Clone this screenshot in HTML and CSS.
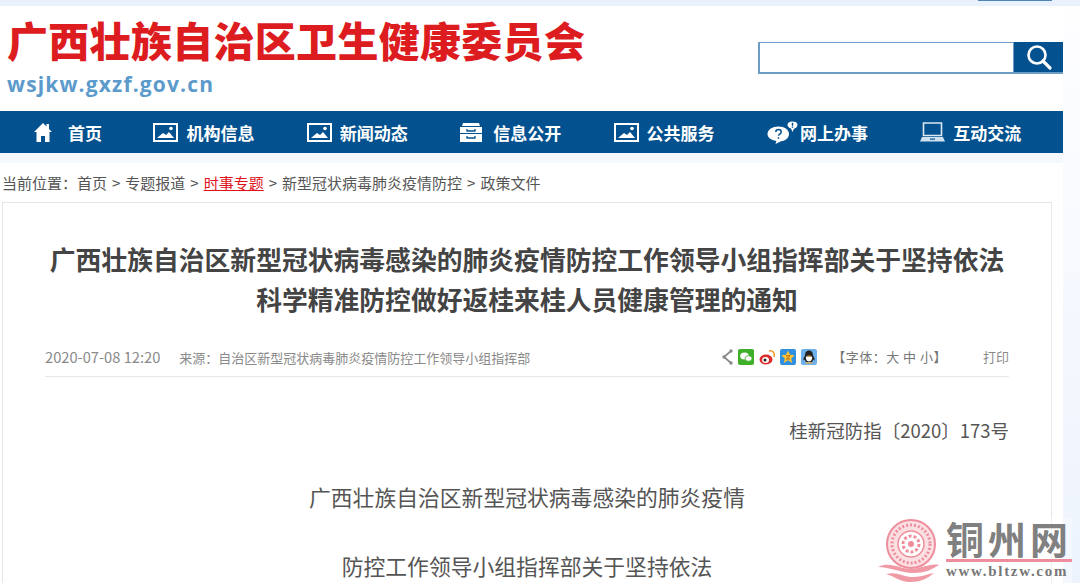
FILE: index.html
```html
<!DOCTYPE html>
<html>
<head>
    <meta charset="UTF-8">
    <title>广西壮族自治区卫生健康委员会</title>
    <link rel="stylesheet" href="styles.css">
</head>
<body>
    <div class="topbar"><span class="topbar-mark"></span></div>
    <div class="page">
        <!-- Header -->
        <div class="header">
            <div class="logo">
                <div class="logo-name">广西壮族自治区卫生健康委员会</div>
                <div class="logo-url">wsjkw.gxzf.gov.cn</div>
            </div>
            <div class="search">
                <div class="search-input"></div>
                <div class="search-button">
                    <svg width="28" height="28" viewBox="0 0 28 28"><circle cx="12" cy="12" r="8.5" fill="none" stroke="#fff" stroke-width="2.6"/><path d="M18 18l7 7" stroke="#fff" stroke-width="3.2" stroke-linecap="round"/></svg>
                </div>
            </div>
        </div>

        <!-- Nav -->
        <div class="nav">
            <a class="nav-item nav-first">
                <svg class="gap-home" width="18" height="19" viewBox="0 0 18 19"><path d="M9 0L0 9h2.500v10h4.500v-6h4v6h4.500V9H18l-3-3V1h-2.500v2.500z" fill="#fff"/></svg>首页
            </a>
            <a class="nav-item">
                <svg class="gap-pic" width="25" height="19" viewBox="0 0 25 19"><use href="#pic"/></svg>机构信息
            </a>
            <a class="nav-item">
                <svg class="gap-pic" width="25" height="19" viewBox="0 0 25 19"><use href="#pic"/></svg>新闻动态
            </a>
            <a class="nav-item">
                <svg class="gap-box" width="22" height="19" viewBox="0 0 22 19"><path d="M3 0h16l1 3H2zM0 4h22v6H0zM0 11h22v8H0z" fill="#fff"/><path d="M7 6v2h8V6M7 13v2h8v-2" fill="none" stroke="#03528f" stroke-width="1.300"/></svg>信息公开
            </a>
            <a class="nav-item">
                <svg class="gap-pic" width="25" height="19" viewBox="0 0 25 19"><use href="#pic"/></svg>公共服务
            </a>
            <a class="nav-item">
                <svg class="gap-chat" width="31" height="23" viewBox="0 0 31 23"><path d="M11.500 5.500c6 0 10.500 3 10.500 7.500s-4.500 7-8 7.300L8.500 23l.8-3C4 19 .5 16.500.5 13c0-4.500 5-7.500 11-7.500z" fill="#fff"/><path d="M25 .5c3.500 0 5.500 1.200 5.500 3.300 0 2.200-2 3.500-3.500 3.900L25.500 11 24 7.500c-2-.5-3.500-2-3.500-3.700C20.500 1.800 22.500.5 25 .5z" fill="#fff"/><path d="M8.800 11c0-3.300 5.400-3.300 5.400 0 0 2-2.700 2.200-2.700 3.800M11.500 16.200v1.600" fill="none" stroke="#03528f" stroke-width="1.500"/><path d="M25.500 1.800v3M25.500 5.500v1.200" stroke="#03528f" stroke-width="1.500"/></svg>网上办事
            </a>
            <a class="nav-item">
                <svg class="gap-laptop" width="25" height="20" viewBox="0 0 25 20"><path d="M3.500 1h18v12.500h-18z" fill="none" stroke="#dce8f2" stroke-width="1.600"/><path d="M2 15h21l2 4.500H0z" fill="#cfe0ee"/><path d="M10 16.500h5v1.200h-5z" fill="#03528f"/></svg>互动交流
            </a>
        </div>
        <div class="nav-strip"></div>

        <!-- Breadcrumb -->
        <div class="crumb">
            当前位置：首页<span class="sep">&gt;</span>专题报道<span class="sep">&gt;</span><a class="crumb-on">时事专题</a><span class="sep">&gt;</span>新型冠状病毒肺炎疫情防控<span class="sep">&gt;</span>政策文件
        </div>

        <!-- Article -->
        <div class="article">
            <h1 class="article-title">广西壮族自治区新型冠状病毒感染的肺炎疫情防控工作领导小组指挥部关于坚持依法<br>科学精准防控做好返桂来桂人员健康管理的通知</h1>
            <div class="meta">
                <div class="meta-left">
                    <span class="meta-date">2020-07-08 12:20</span>
                    <span>来源：自治区新型冠状病毒肺炎疫情防控工作领导小组指挥部</span>
                </div>
                <div class="meta-right">
                    <div class="share">
                        <svg width="12" height="16" viewBox="0 0 12 16"><path d="M10 2L3 8l7 6" fill="none" stroke="#8a8a8a" stroke-width="1.800"/><circle cx="10" cy="2" r="1.700" fill="#8a8a8a"/><circle cx="10" cy="14" r="1.700" fill="#8a8a8a"/><circle cx="3" cy="8" r="1.700" fill="#8a8a8a"/></svg>
                        <svg width="16" height="16" viewBox="0 0 16 16"><rect width="16" height="16" rx="2" fill="#3fae29"/><ellipse cx="6.500" cy="7" rx="4.300" ry="3.500" fill="#fff"/><ellipse cx="10.500" cy="9.500" rx="3.500" ry="2.800" fill="#fff" stroke="#3fae29" stroke-width=".8"/></svg>
                        <svg width="16" height="16" viewBox="0 0 16 16"><ellipse cx="7" cy="10.500" rx="6.500" ry="5" fill="#dc2b2b"/><ellipse cx="6.500" cy="11" rx="3.500" ry="3" fill="#fff"/><circle cx="6" cy="11" r="1.500" fill="#222"/><path d="M10 2c4-1 6 2 5 6" fill="none" stroke="#f19a2c" stroke-width="1.600"/></svg>
                        <svg width="16" height="16" viewBox="0 0 16 16"><rect width="16" height="16" rx="2" fill="#2f8fe0"/><path d="M8 1.500l2 4.300 4.700.5-3.500 3.100 1 4.600L8 11.200l-4.200 2.800 1-4.600L1.300 6.300 6 5.800z" fill="#fbc531"/><path d="M6 6.800h4L6.300 10h3.700" fill="none" stroke="#b5651d" stroke-width="1"/></svg>
                        <svg width="16" height="16" viewBox="0 0 16 16"><rect width="16" height="16" rx="2" fill="#6db0ea"/><path d="M8 1.500c3 0 4 2.500 4 5 1 1.500 2 3.500 1.500 5l-1.500-1c0 1-.5 2-1 2.500H5c-.5-.5-1-1.500-1-2.500l-1.500 1C2 10 3 8 4 6.500c0-2.500 1-5 4-5z" fill="#222"/><path d="M5 7.500h6c.5 2-.5 5-3 5s-3.500-3-3-5z" fill="#fff"/><path d="M4 14.500c1-1.500 3-1.500 3.500-1h1c.5-.5 2.500-.5 3.500 1z" fill="#f5a623"/><path d="M6 6.500h4L8 8z" fill="#f5a623"/></svg>
                    </div>
                    <span class="font-size">【字体：大 中 小】</span>
                    <span class="print">打印</span>
                </div>
            </div>
            <div class="article-body">
                <p class="doc-no">桂新冠防指〔2020〕173号</p>
                <p class="doc-to">广西壮族自治区新型冠状病毒感染的肺炎疫情</p>
                <p class="doc-to">防控工作领导小组指挥部关于坚持依法</p>
            </div>
        </div>
    </div>

    <!-- Watermark -->
    <div class="watermark">
        <svg class="watermark-logo" width="62" height="66" viewBox="0 0 62 66">
            <circle cx="33" cy="27" r="24" fill="#fbdfe2" stroke="#ee8e9c" stroke-width="2"/>
            <circle cx="33" cy="27" r="19" fill="none" stroke="#ee8e9c" stroke-width="3" stroke-dasharray="2 2"/>
            <circle cx="33" cy="27" r="13" fill="#fff" stroke="#ee8e9c" stroke-width="1.500"/>
            <circle cx="33" cy="27" r="8" fill="#fff" stroke="#ee8e9c" stroke-width="3" stroke-dasharray="3 2"/>
            <circle cx="33" cy="27" r="3" fill="#ee8e9c"/>
            <path d="M0 50c12-6 22 2 32 2s20-6 29-4c-8 5-14 8-26 8S12 50 0 50z" fill="#f09aa6"/>
            <path d="M8 57c10-3 18 3 27 3s14-3 21-4c-7 6-14 9-24 9S16 59 8 57z" fill="#f09aa6"/>
        </svg>
        <div class="watermark-text">
            <div class="watermark-name">铜州网</div>
            <div class="watermark-url">www.bltzw.com</div>
        </div>
    </div>

    <svg class="defs" width="0" height="0">
        <symbol id="pic" viewBox="0 0 25 19">
            <rect x="1" y="1" width="23" height="17" fill="none" stroke="#fff" stroke-width="2"/>
            <path d="M4 15l6-5 3 2 3-3 5 6z" fill="#fff"/>
            <circle cx="18" cy="5.500" r="1.800" fill="#fff"/>
        </symbol>
    </svg>
</body>
</html>
```

FILE: styles.css
```css
html, body {
    margin: 0;
    height: 583px;
    overflow: hidden;
}
body {
    position: relative;
    background: linear-gradient(#fefeff, #edf3fd);
    font-family: "Noto Sans CJK SC", "Liberation Sans", sans-serif;
    color: #555;
}
.topbar {
    display: flex;
    justify-content: flex-end;
    height: 6px;
    background-color: #e9f1fc;
    padding-right: 28px;
}
.topbar-mark {
    width: 74px;
    height: 1px;
    background-color: #4f86b8;
}
.page {
    width: 1063px;
    height: 577px;
    background-color: #fff;
    overflow: hidden;
}
.header {
    display: flex;
    justify-content: space-between;
    height: 105px;
}
.logo {
    padding: 6px 0 0 7px;
}
.logo-name {
    font-size: 41px;
    line-height: 54px;
    font-weight: 900;
    letter-spacing: .3px;
    color: #dc1c1f;
    white-space: nowrap;
}
.logo-url {
    margin-top: 5px;
    font-family: "Open Sans", sans-serif;
    font-size: 21px;
    line-height: 26px;
    font-weight: 700;
    letter-spacing: 1.150px;
    color: #5b9acb;
}
.search {
    display: flex;
    width: 305px;
    height: 32px;
    margin-top: 36px;
}
.search-input {
    flex: 1;
    border: 1px solid #6f9cc4;
    border-left-width: 2px;
    border-bottom-width: 2px;
    background-color: #fff;
}
.search-button {
    display: flex;
    justify-content: center;
    align-items: center;
    width: 49px;
    background-color: #03528f;
    border-bottom: 2px solid #6f9cc4;
}
.nav {
    display: grid;
    grid-template-columns: repeat(7, 153.4px);
    height: 42px;
    background-color: #03528f;
}
.nav-item {
    display: flex;
    align-items: center;
    font-size: 17px;
    font-weight: 700;
    color: #fff;
    white-space: nowrap;
}
.nav-first {
    padding-left: 34px;
}
.gap-home { margin-right: 16px; }
.gap-pic { margin-right: 8px; }
.gap-box { margin-right: 11px; }
.gap-chat { margin-right: 2px; }
.gap-laptop { margin-right: 8px; }
.nav-strip {
    height: 10px;
    background-color: #f5f9ff;
}
.crumb {
    height: 39px;
    padding: 0 0 0 2px;
    font-size: 15px;
    line-height: 39px;
    color: #555;
    white-space: nowrap;
}
.sep {
    margin: 0 5px;
}
.crumb-on {
    color: #e0131b;
    text-decoration: underline;
}
.article {
    margin: 0 11px 0 2px;
    padding: 0 42px;
    border: 1px solid #e6e6e6;
    height: 500px;
}
.article-title {
    margin: 0;
    padding-top: 36px;
    font-size: 25.800px;
    line-height: 40px;
    font-weight: 700;
    text-align: center;
    color: #444;
    white-space: nowrap;
}
.meta {
    display: flex;
    justify-content: space-between;
    align-items: center;
    height: 39px;
    margin-top: 18px;
    border-bottom: 1px solid #e8e8e8;
    font-size: 13px;
    color: #8a8a8a;
}
.meta-date {
    margin-right: 16px;
    font-size: 14.700px;
}
.meta-right {
    display: flex;
    align-items: center;
}
.share {
    display: flex;
    align-items: center;
    gap: 5px;
    margin-right: 15px;
}
.font-size {
    margin-right: 36px;
    letter-spacing: .5px;
    color: #777;
}
.article-body {
    color: #555;
}
.article-body p {
    margin: 0;
}
.doc-no {
    padding-top: 38px;
    font-size: 18.500px;
    line-height: 30px;
    text-align: right;
}
.doc-to {
    padding-top: 37px;
    font-size: 21.800px;
    line-height: 32px;
    text-align: center;
    white-space: nowrap;
}
.doc-no + .doc-to {
    padding-top: 36px;
}
.watermark {
    position: absolute;
    left: 878px;
    top: 517px;
    display: flex;
    gap: 6px;
    background-color: rgba(255, 255, 255, .35);
}
.watermark-logo {
    flex: none;
}
.watermark-name {
    font-family: "Noto Sans CJK SC", serif;
    font-size: 38px;
    line-height: 42px;
    font-weight: 700;
    letter-spacing: 4px;
    color: #808080;
    border-bottom: 3px solid #ee8e9c;
    white-space: nowrap;
}
.watermark-url {
    font-family: "Liberation Serif", serif;
    font-size: 15px;
    line-height: 18px;
    font-weight: 700;
    letter-spacing: 1.700px;
    color: #777;
    white-space: nowrap;
}
.defs {
    position: absolute;
}
```
